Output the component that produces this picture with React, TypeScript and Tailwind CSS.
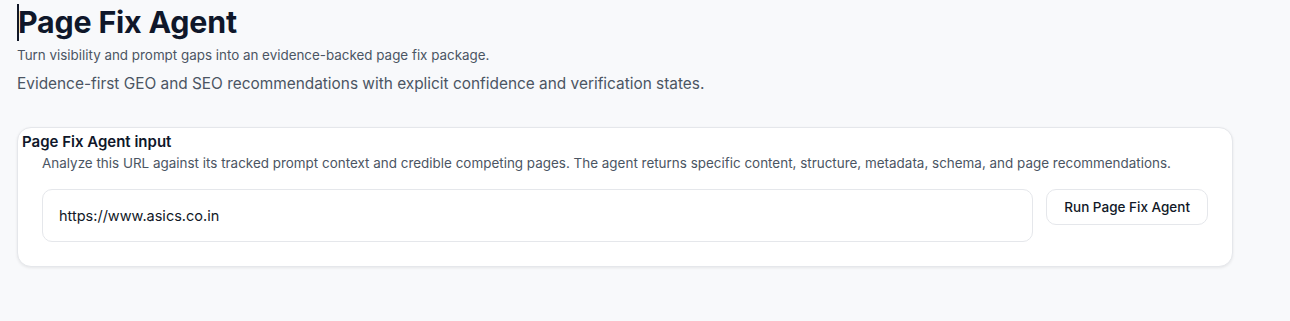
export default function App() {
    return (
        <div className="min-h-[321px] bg-[#f8f9fb] font-['Inter',sans-serif] text-[#0f172a]">
            <div className="pl-[17px] pt-[3px]">
                <div className="flex items-center">
                    <span className="mr-[-1px] inline-block h-[37px] w-[2px] bg-[#111827]" />
                    <h1 className="text-[30.4px] font-bold leading-[38px] tracking-[-0.2px]">Page Fix Agent</h1>
                </div>
                <p className="mt-[5px] text-[13.4px] leading-[18px] text-[#4b5563]">
                    Turn visibility and prompt gaps into an evidence-backed page fix package.
                </p>
                <p className="mt-[9px] text-[15.4px] leading-[22px] text-[#4b5563]">
                    Evidence-first GEO and SEO recommendations with explicit confidence and verification states.
                </p>
            </div>

            <div className="ml-[17px] mt-[32px] w-[1216px] rounded-[14px] border border-[#e5e7eb] bg-white pb-[24px] shadow-[0_1px_3px_rgba(0,0,0,0.08)]">
                <h2 className="pl-[4px] pt-[3px] text-[15px] font-semibold leading-[22px]">Page Fix Agent input</h2>
                <p className="pl-[24px] pt-[1px] text-[13.45px] leading-[18px] text-[#4b5563]">
                    Analyze this URL against its tracked prompt context and credible competing pages. The agent returns specific content, structure, metadata, schema, and page recommendations.
                </p>
                <div className="mt-[17px] flex items-start gap-[13px] pl-[24px] pr-[24px]">
                    <input
                        defaultValue="https://www.asics.co.in"
                        className="h-[53px] flex-1 rounded-[10px] border border-[#e5e7eb] px-[16px] text-[14.5px] text-[#111827] outline-none"
                    />
                    <button
                        type="button"
                        className="h-[36px] rounded-[10px] border border-[#e5e7eb] bg-white px-[17px] text-[13.5px] font-medium text-[#111827]"
                    >
                        Run Page Fix Agent
                    </button>
                </div>
            </div>
        </div>
    );
}
